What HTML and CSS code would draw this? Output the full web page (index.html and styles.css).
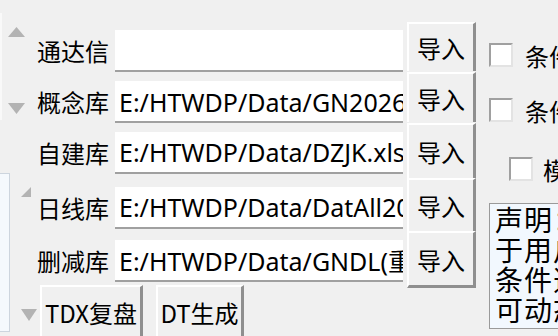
FILE: index.html
```html
<!DOCTYPE html>
<html lang="zh-CN">
<head>
    <meta charset="UTF-8">
    <title>数据导入</title>
    <link rel="stylesheet" href="styles.css">
</head>
<body>
    <div class="window">
        <div class="gutter">
            <div class="spin-top">
                <div class="strip"></div>
                <div class="arrows">
                    <svg class="arrow-up" width="17" height="10" viewBox="0 0 17 10"><polygon points="8.5,0 17,10 0,10"/></svg>
                    <svg class="arrow-down" width="17" height="11" viewBox="0 0 17 11"><polygon points="0,0 17,0 8.5,11"/></svg>
                </div>
            </div>
            <div class="spin-bottom">
                <div class="panel"></div>
                <div class="arrows arrows-low">
                    <svg class="corner" width="10" height="10" viewBox="0 0 10 10"><polygon points="10,0 10,10 0,10"/></svg>
                    <svg class="arrow-down low" width="16" height="12" viewBox="0 0 16 12"><polygon points="0,0 16,0 8,12"/></svg>
                </div>
            </div>
        </div>

        <div class="form">
            <div class="row r1">
                <div class="field">
                    <label>通达信</label>
                    <input type="text" value="">
                </div>
                <button class="import">导入</button>
            </div>
            <div class="row r2">
                <div class="field">
                    <label>概念库</label>
                    <input type="text" value="E:/HTWDP/Data/GN2026概念.xlsx">
                </div>
                <button class="import">导入</button>
            </div>
            <div class="row r3">
                <div class="field">
                    <label>自建库</label>
                    <input type="text" value="E:/HTWDP/Data/DZJK.xlsx">
                </div>
                <button class="import">导入</button>
            </div>
            <div class="row r4">
                <div class="field">
                    <label>日线库</label>
                    <input type="text" value="E:/HTWDP/Data/DatAll2025.txt">
                </div>
                <button class="import">导入</button>
            </div>
            <div class="row r5">
                <div class="field">
                    <label>删减库</label>
                    <input type="text" value="E:/HTWDP/Data/GNDL(重复).xlsx">
                </div>
                <button class="import last">导入</button>
            </div>

            <div class="tools">
                <button class="tool tdx">TDX复盘</button>
                <button class="tool dt">DT生成</button>
            </div>
        </div>

        <div class="side">
            <div class="check c1"><span class="box"></span><span>条件选股一</span></div>
            <div class="check c2"><span class="box"></span><span>条件选股二</span></div>
            <div class="check c3"><span class="box"></span><span>模糊匹配</span></div>
            <div class="memo">
                <div>声明：本工具</div>
                <div>于用户学习研究</div>
                <div>条件选股结果</div>
                <div>可动态调整</div>
            </div>
        </div>
    </div>
</body>
</html>
```

FILE: styles.css
```css
* {
    box-sizing: border-box;
    margin: 0;
    padding: 0;
}

body {
    background: #f0f0f0;
    font-family: 'Noto Sans', 'Noto Sans CJK SC', sans-serif;
    color: #000;
    width: 558px;
    height: 336px;
    overflow: hidden;
}

.window {
    display: flex;
    width: 660px;
    height: 336px;
}

/* left spinner gutter */
.gutter {
    width: 37px;
    flex-shrink: 0;
}

.spin-top {
    display: flex;
    height: 173px;
}

.strip {
    width: 2px;
    height: 107px;
    margin-top: 13px;
    background: #f9f9f9;
}

.arrows {
    display: flex;
    flex-direction: column;
    margin-left: 6px;
}

.arrows svg {
    fill: #b3b3b3;
    display: block;
}

.arrow-up {
    margin-top: 27px;
}

.arrow-down {
    margin-top: 66px;
}

.spin-bottom {
    display: flex;
}

.panel {
    width: 12px;
    height: 159px;
    background: #f5f9fd;
    border: 1px solid #cdd5de;
    border-left: none;
}

.arrows-low {
    margin-left: 11px;
}

.corner {
    margin-top: 14px;
}

.arrow-down.low {
    margin-top: 112px;
}

/* import rows */
.form {
    width: 439px;
    flex-shrink: 0;
    padding-top: 22px;
}

.row {
    display: flex;
    align-items: flex-start;
}

.field {
    display: flex;
    align-items: center;
    width: 366px;
    height: 42px;
    margin-top: 9px;
    margin-right: 4px;
}

.r1 .field {
    margin-top: 8px;
}

.field label {
    width: 78px;
    font-family: 'Noto Sans CJK SC', sans-serif;
    font-size: 24px;
    line-height: 42px;
}

.field input {
    width: 288px;
    height: 42px;
    border: none;
    border-bottom: 2px solid #a0a0a0;
    background: #fff;
    padding: 0 0 0 4px;
    font-family: 'Noto Sans', 'Noto Sans CJK SC', sans-serif;
    font-size: 25px;
    color: #000;
    outline: none;
}

.import,
.tool {
    background: #f0f0f0;
    border: none;
    border-top: 2px solid #fff;
    border-left: 2px solid #fff;
    border-right: 3px solid #8f8f8f;
    font-family: 'Noto Sans CJK SC', sans-serif;
    font-size: 24px;
    color: #000;
}

.import {
    width: 69px;
}

.r1 .import { height: 49px; }
.r2 .import { height: 50px; }
.r3 .import { height: 55px; }
.r4 .import { height: 53px; }
.r5 .import { height: 57px; }

.import.last {
    border-bottom: 3px solid #8f8f8f;
}

.tools {
    display: flex;
    gap: 13px;
    margin-top: -3px;
    margin-left: 3px;
}

.tool {
    height: 60px;
    padding: 0 0 8px;
}

.tdx {
    width: 103px;
}

.dt {
    width: 88px;
}

/* right side */
.side {
    margin-left: 13px;
    padding-top: 43px;
    width: 160px;
    flex-shrink: 0;
}

.check {
    display: flex;
    align-items: center;
    gap: 12px;
    font-family: 'Noto Sans CJK SC', sans-serif;
    font-size: 24px;
    height: 24px;
    white-space: nowrap;
}

.box {
    width: 24px;
    height: 24px;
    flex-shrink: 0;
    background: #fff;
    border: 2px solid;
    border-color: #a0a0a0 #e3e3e3 #e3e3e3 #a0a0a0;
}

.c2 {
    margin-top: 31px;
}

.c3 {
    margin-top: 35px;
    margin-left: 20px;
    gap: 10px;
}

.memo {
    margin-top: 22px;
    width: 140px;
    height: 126px;
    background: #f2f8fe;
    border: 1px solid #9a9a9a;
    padding: 0 0 0 5px;
    font-family: 'Noto Sans CJK SC', sans-serif;
    font-size: 28px;
    line-height: 30px;
    letter-spacing: 1px;
    white-space: nowrap;
    overflow: hidden;
}
```
